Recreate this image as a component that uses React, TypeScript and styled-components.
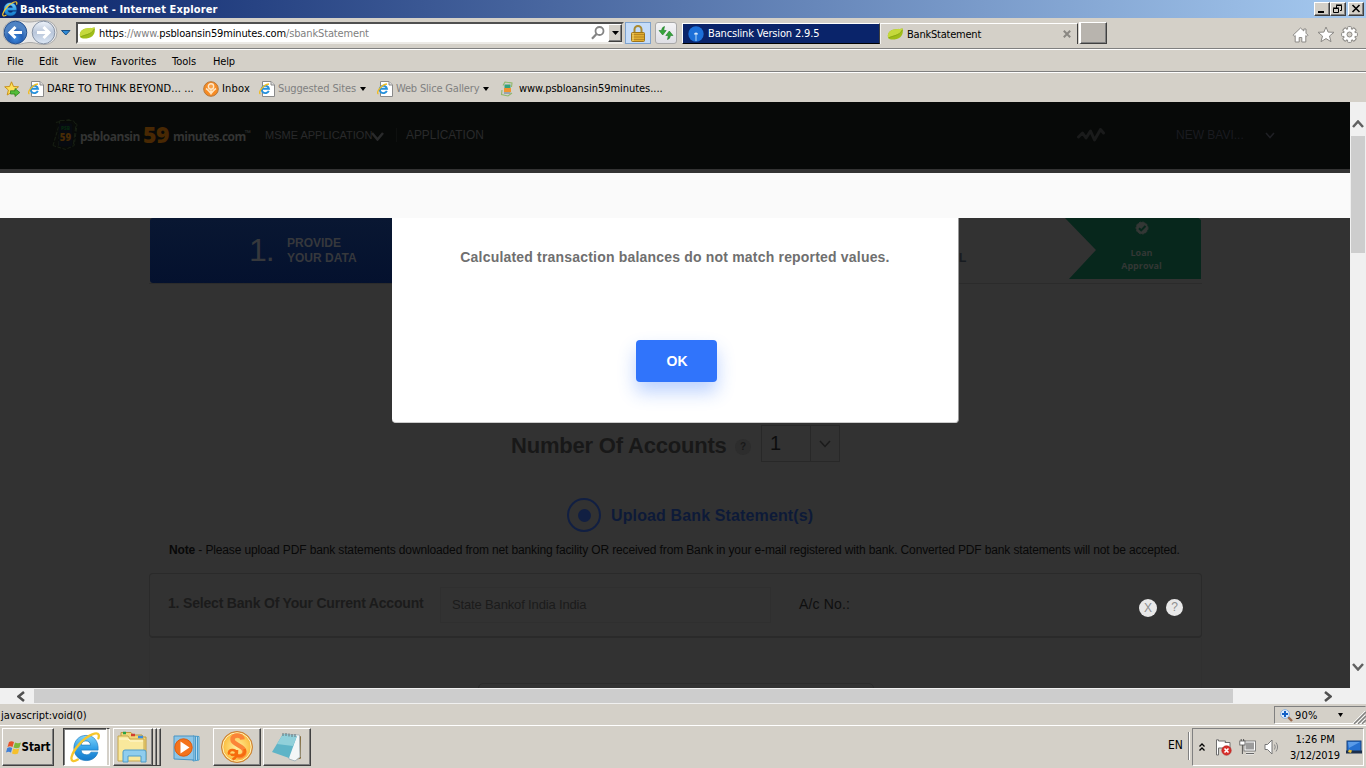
import React from "react";
import styled, { createGlobalStyle, css } from "styled-components";

const Global = createGlobalStyle`
  * { box-sizing: border-box; }
  html, body { margin: 0; padding: 0; overflow: hidden; }
  body { background: #d4d0c8; }
  svg { display: block; flex: none; }
`;

const uiFont = `"DejaVu Sans Condensed", Tahoma, "DejaVu Sans", sans-serif`;
const pageFont = `"Liberation Sans", Arial, sans-serif`;

const Screen = styled.div`
  width: 1366px;
  height: 768px;
  display: flex;
  flex-direction: column;
  background: #d4d0c8;
  font-family: ${uiFont};
  font-stretch: condensed;
  font-size: 11px;
  color: #000;
  overflow: hidden;
`;

const Label = styled.span<{ $w?: number; $ls?: number; $color?: string; $ml?: number }>`
  display: block;
  flex: none;
  white-space: nowrap;
  width: ${(p) => (p.$w ? `${p.$w}px` : "auto")};
  letter-spacing: ${(p) => p.$ls ?? 0}px;
  color: ${(p) => p.$color ?? "inherit"};
  margin-left: ${(p) => p.$ml ?? 0}px;
`;

const Dark = styled.span`
  color: #000;
`;

const Icon = styled.div<{ $ml?: number; $mt?: number }>`
  flex: none;
  margin-left: ${(p) => p.$ml ?? 0}px;
  margin-top: ${(p) => p.$mt ?? 0}px;
`;

const raised = css`
  border: 1px solid;
  border-color: #fff #404040 #404040 #fff;
  box-shadow: inset -1px -1px 0 #808080;
`;

/* ---------- window chrome ---------- */

const TitleBar = styled.header`
  height: 18px;
  flex: none;
  display: flex;
  align-items: center;
  padding: 0 2px;
  color: #fff;
  font-weight: bold;
  background: linear-gradient(90deg, #0a246a, #a6caf0);
`;

const WindowButtons = styled.div`
  margin-left: auto;
  display: flex;
`;

const WindowButton = styled.div<{ $gap?: number }>`
  ${raised}
  width: 16px;
  height: 14px;
  margin-left: ${(p) => p.$gap ?? 0}px;
  background: #d4d0c8;
`;

const NavBar = styled.div`
  height: 31px;
  flex: none;
  display: flex;
  align-items: flex-start;
  padding: 4px 0 0 3px;
  border-bottom: 1px solid #808080;
`;

const AddressBar = styled.div`
  width: 548px;
  height: 22px;
  margin-left: 5px;
  display: flex;
  align-items: center;
  padding-left: 1px;
  background: #fff;
  border: 2px solid;
  border-color: #505050 #d4d0c8 #eceae6 #505050;
`;

const DropButton = styled.div`
  ${raised}
  width: 16px;
  height: 18px;
  margin-left: 3px;
  padding: 6px 0 0 3px;
  background: #d4d0c8;
`;

const ToolButton = styled.div<{ $active?: boolean }>`
  width: ${(p) => (p.$active ? 26 : 22)}px;
  height: 22px;
  margin-left: ${(p) => (p.$active ? 1 : 4)}px;
  display: flex;
  justify-content: center;
  align-items: center;
  border: 1px solid ${(p) => (p.$active ? "#7da2ce" : "#a9a9a9")};
  border-radius: ${(p) => (p.$active ? 0 : 3)}px;
  background: ${(p) => (p.$active ? "#c5dcf9" : "linear-gradient(#f4f4f6, #dedee4)")};
`;

const Tab = styled.div<{ $dark?: boolean }>`
  width: 198px;
  height: 21px;
  margin-top: 1px;
  display: flex;
  align-items: center;
  border: solid;
  border-width: 1px 1px ${(p) => (p.$dark ? "1px" : "0")} 1px;
  border-color: ${(p) => (p.$dark ? "#fff #404040 #000 #fff" : "#fff #404040 #000 #f4f3f0")};
  color: ${(p) => (p.$dark ? "#fff" : "#000")};
  background: ${(p) => (p.$dark ? "#0a246a" : "#d4d0c8")};
`;

const NewTab = styled.div`
  ${raised}
  width: 28px;
  height: 22px;
  margin-left: 1px;
  background: #b8b4ae;
  border-left-width: 2px;
`;

const MenuBar = styled.nav`
  height: 23px;
  flex: none;
  display: flex;
  align-items: center;
  padding: 1px 0 0 7px;
  border-top: 1px solid #fff;
  border-bottom: 1px solid #808080;
`;

const FavoritesBar = styled.div`
  height: 30px;
  flex: none;
  display: flex;
  align-items: center;
  padding: 2px 0 0 4px;
  border-top: 1px solid #fff;
`;

/* ---------- viewport ---------- */

const Viewport = styled.main`
  height: 586px;
  flex: none;
  display: flex;
`;

const Page = styled.div`
  position: relative;
  width: 1350px;
  display: flex;
  flex-direction: column;
  background: #323232;
  font-family: ${pageFont};
  font-stretch: normal;
  overflow: hidden;
`;

const SiteHeader = styled.div`
  height: 67px;
  flex: none;
  display: flex;
  align-items: center;
  padding: 0 0 2px 52px;
  background: #070908;
  color: #292a2b;
`;

const Brand = styled.div`
  display: flex;
  align-items: center;
  margin: 4px 0 0 1px;
  width: 186px;
  color: #333433;
  font-family: "Open Sans", sans-serif;
  font-weight: 700;
  font-size: 12px;
`;

const BrandNumber = styled.span`
  width: 30px;
  flex: none;
  padding-left: 3px;
  margin-top: -6px;
  font-size: 23px;
  font-weight: 800;
  line-height: 24px;
  letter-spacing: -0.5px;
  color: #482803;
`;

const Tm = styled.span`
  font-size: 8px;
  line-height: 8px;
  margin: -8px 0 0 -1px;
`;

const NavText = styled.span<{ $w: number; $size: number; $color?: string }>`
  display: block;
  flex: none;
  white-space: nowrap;
  width: ${(p) => p.$w}px;
  font-size: ${(p) => p.$size}px;
  color: ${(p) => p.$color ?? "inherit"};
`;

const Separator = styled.i`
  width: 1px;
  height: 14px;
  margin: 0 9px 0 12px;
  background: #0e100f;
`;

const LightBand = styled.div`
  height: 49px;
  flex: none;
  border-top: 4px solid #333;
  background: #fafafa;
`;

const Body = styled.div`
  width: 1053px;
  margin-left: 149px;
  display: flex;
  flex-direction: column;
  align-items: stretch;
`;

const Stepper = styled.div`
  height: 66px;
  display: flex;
  align-items: flex-start;
  justify-content: space-between;
  border-bottom: 1px solid #2b2b2b;
  padding: 0 0 0 1px;
`;

const ActiveStep = styled.div`
  width: 260px;
  height: 65px;
  display: flex;
  padding: 15px 0 0 99px;
  border-radius: 3px;
  color: #36383c;
  background: linear-gradient(#091732, #04112e);
`;

const StepNumber = styled.span`
  width: 38px;
  font-size: 32px;
  line-height: 34px;
  letter-spacing: -1px;
`;

const StepTitle = styled.span`
  padding-top: 3px;
  font-weight: bold;
  font-size: 12px;
  line-height: 15px;
`;

const StepEnd = styled.div`
  display: flex;
`;

const HiddenStep = styled.span`
  padding-top: 33px;
  width: 106px;
  font-size: 12px;
  font-weight: bold;
  color: #171b20;
`;

const ApprovalStep = styled.div`
  width: 136px;
  height: 61px;
  padding: 3px 0 0 17px;
  display: flex;
  flex-direction: column;
  align-items: center;
  margin-right: 1px;
  background: #07271c;
  clip-path: polygon(0 0, 98% 0, 100% 2px, 100% 100%, 4px 100%, 31px 32px);
  color: #333735;
  font: bold 9px/13px "Open Sans", sans-serif;
  text-align: center;
`;

const ApprovalText = styled.span`
  padding-top: 11px;
`;

const AccountsRow = styled.div`
  height: 37px;
  margin-top: 141px;
  padding-left: 362px;
  display: flex;
  align-items: center;
  color: #181818;
`;

const Heading = styled.h2`
  margin: 4px 0 0;
  width: 224px;
  white-space: nowrap;
  font-size: 22px;
  letter-spacing: -0.2px;
  line-height: 26px;
  font-weight: bold;
`;

const Badge = styled.i<{ $size: number; $bg: string; $color: string; $ml?: number; $mt?: number; $bold?: boolean }>`
  width: ${(p) => p.$size}px;
  height: ${(p) => p.$size}px;
  margin-left: ${(p) => p.$ml ?? 0}px;
  margin-top: ${(p) => p.$mt ?? 0}px;
  flex: none;
  border-radius: 50%;
  background: ${(p) => p.$bg};
  color: ${(p) => p.$color};
  font: ${(p) => (p.$bold ? "bold 10px" : "12px")} / ${(p) => p.$size}px ${pageFont};
  text-align: center;
`;

const Select = styled.div`
  width: 79px;
  height: 37px;
  margin-left: 10px;
  display: flex;
  border: 1px solid #282828;
`;

const SelectValue = styled.span`
  width: 49px;
  padding-left: 8px;
  font-size: 20px;
  line-height: 34px;
  color: #0d0d0d;
  border-right: 1px solid #282828;
`;

const UploadRow = styled.div`
  height: 34px;
  margin-top: 36px;
  padding-left: 418px;
  display: flex;
  align-items: center;
`;

const Radio = styled.i`
  width: 34px;
  height: 34px;
  display: grid;
  place-items: center;
  border: 2px solid #111f42;
  border-radius: 50%;
  &::after {
    content: "";
    width: 13px;
    height: 13px;
    border-radius: 50%;
    background: #111f42;
  }
`;

const UploadTitle = styled.span`
  margin: 1px 0 0 10px;
  font-size: 16px;
  letter-spacing: 0.13px;
  font-weight: bold;
  color: #0d1a38;
`;

const Note = styled.p`
  margin: 10px 0 0;
  height: 31px;
  padding-left: 20px;
  white-space: nowrap;
  font-size: 12px;
  letter-spacing: -0.137px;
  line-height: 16px;
  color: #080808;
`;

const AccountCard = styled.div`
  height: 65px;
  display: flex;
  align-items: center;
  padding-left: 17px;
  border: 1px solid #2a2a2a;
  border-bottom-width: 2px;
  border-radius: 4px;
`;

const CardTitle = styled.span`
  width: 273px;
  flex: none;
  padding-left: 1px;
  margin-top: -4px;
  white-space: nowrap;
  font-size: 14px;
  letter-spacing: -0.19px;
  font-weight: bold;
  color: #1b1b1b;
`;

const Field = styled.span`
  width: 331px;
  flex: none;
  height: 36px;
  margin-top: -1px;
  padding-left: 11px;
  font-size: 13px;
  letter-spacing: -0.15px;
  line-height: 34px;
  color: #1b1b1b;
  border: 1px solid #2f2f2f;
`;

const AccountNo = styled.span`
  width: 368px;
  flex: none;
  margin-top: -2px;
  padding-left: 28px;
  font-size: 14px;
  letter-spacing: 0.15px;
  color: #0f0f0f;
`;

const CardBody = styled.div`
  height: 60px;
  padding: 45px 0 0 328px;
  border: 1px solid #303030;
  border-top: 0;
`;

const InnerField = styled.div`
  width: 396px;
  height: 20px;
  border: 1px solid #2b2b2b;
  border-radius: 5px;
`;

const Dialog = styled.section`
  position: absolute;
  left: 392px;
  top: 116px;
  width: 567px;
  height: 205px;
  display: flex;
  flex-direction: column;
  align-items: center;
  padding: 30px 0 0 0;
  background: #fff;
  border-radius: 0 0 4px 4px;
  border-bottom: 1px solid #ccc;
  border-right: 1px solid #999;
`;

const DialogText = styled.p`
  margin: 0;
  height: 92px;
  font-size: 14px;
  letter-spacing: 0.19px;
  line-height: 18px;
  font-weight: bold;
  color: #6f6f6f;
`;

const OkButton = styled.button`
  width: 81px;
  height: 42px;
  margin-left: 3px;
  flex: none;
  padding: 0 0 0 1px;
  border: 0;
  border-radius: 4px;
  background: #3074fb;
  color: #fff;
  font: bold 14px ${pageFont};
  box-shadow: 0 10px 18px rgba(48, 116, 251, 0.32);
`;

const VScroll = styled.div`
  width: 16px;
  display: flex;
  flex-direction: column;
  align-items: center;
  background: #f0f0f0;
`;

const VThumb = styled.div`
  width: 14px;
  height: 117px;
  margin: 8px 0 410px;
  background: #cdcdcd;
`;

const HScroll = styled.div`
  height: 16px;
  flex: none;
  display: flex;
  align-items: center;
  padding-left: 17px;
  background: #f0f0f0;
`;

const HThumb = styled.div`
  width: 1199px;
  height: 14px;
  margin: 0 91px 0 9px;
  background: #cdcdcd;
`;

const StatusBar = styled.div`
  height: 21px;
  flex: none;
  display: flex;
  align-items: center;
  padding: 1px 0 0 1px;
`;

const ZoomBox = styled.div`
  width: 92px;
  height: 18px;
  margin-left: auto;
  padding-left: 5px;
  display: flex;
  align-items: center;
  border: 1px solid;
  border-color: #808080 #d4d0c8 #fff #808080;
`;

/* ---------- task bar ---------- */

const TaskBar = styled.footer`
  height: 43px;
  flex: none;
  display: flex;
  align-items: flex-start;
  padding: 2px 0 0 2px;
  border-top: 1px solid #fff;
`;

const TaskButton = styled.div<{ $w: number; $ml?: number }>`
  ${raised}
  width: ${(p) => p.$w}px;
  height: 38px;
  margin-left: ${(p) => p.$ml ?? 2}px;
  flex: none;
  display: flex;
  align-items: center;
  justify-content: center;
  font-size: 11.500px;
  font-weight: bold;
`;

const PressedButton = styled.div`
  width: 44px;
  height: 38px;
  margin-left: 9px;
  flex: none;
  display: grid;
  place-items: center;
  background: #fff;
  border: 1px solid;
  border-color: #404040 #fff #fff #404040;
  box-shadow: inset 1px 1px 0 #808080;
`;

const StackEdge = styled.i<{ $light?: boolean }>`
  width: ${(p) => (p.$light ? 3 : 4)}px;
  height: 38px;
  flex: none;
  border-right: 1px solid ${(p) => (p.$light ? "#fff" : "#404040")};
  border-top: 1px solid ${(p) => (p.$light ? "#404040" : "#fff")};
  border-bottom: 1px solid ${(p) => (p.$light ? "#fff" : "#404040")};
  box-shadow: ${(p) => (p.$light ? "none" : "inset -1px 0 0 #808080")};
`;

const Language = styled.div`
  margin-left: auto;
  width: 24px;
  height: 28px;
  margin-top: 4px;
  line-height: 26px;
  padding-left: 3px;
  font-size: 12px;
  border-right: 1px solid #808080;
  box-shadow: 1px 0 0 #fff;
  white-space: nowrap;
`;

const Tray = styled.div`
  width: 172px;
  height: 38px;
  margin: 0 2px 0 3px;
  flex: none;
  display: flex;
  align-items: center;
  padding-left: 6px;
  border: 1px solid;
  border-color: #808080 #fff #fff #808080;
`;

const Clock = styled.div`
  width: 60px;
  margin: 1px 0 0 6px;
  text-align: center;
  line-height: 16px;
  letter-spacing: -0.1px;
  white-space: nowrap;
`;

/* ---------- icons ---------- */

const IELogo = ({ size = 16 }: { size?: number }) => (
  <svg width={size} height={size} viewBox="0 0 32 32">
    <defs>
      <linearGradient id="ieBlue" x2="0" y2="1">
        <stop offset="0" stopColor="#7ed3fa" />
        <stop offset=".55" stopColor="#2c9ce6" />
        <stop offset="1" stopColor="#1779c9" />
      </linearGradient>
    </defs>
    <path
      fill="url(#ieBlue)"
      stroke="#1c78bd"
      strokeWidth=".7"
      fillRule="evenodd"
      d="M16.500 3.500C9 3.500 4 9.500 4 16.500S9 29.500 16.600 29.500c6.200 0 10.800-3.500 12.100-8.700h-7c-.9 1.700-2.500 2.700-4.800 2.700-3.300 0-5.300-1.800-5.400-4.800H29C29.600 9.500 24.800 3.500 16.500 3.500zm-5 10c.4-2.700 2.200-4.300 4.900-4.300s4.600 1.600 4.800 4.300z"
    />
    <path
      fill="none"
      stroke="#f6c62c"
      strokeWidth="2.400"
      strokeLinecap="round"
      d="M8 28.500c-4 2.500-7.500 2-6.300-3C3.500 18 14 6 23 2.500c5-2 8-1 6.300 4"
    />
  </svg>
);

const IEPage = () => (
  <svg width="16" height="16" viewBox="0 0 16 16">
    <path d="M3.500.5h8.500l3.500 3.500v11.500h-12z" fill="#fff" stroke="#8a8a8a" />
    <path d="M12 .5V4h3.500" fill="#ddd" stroke="#8a8a8a" />
    <path d="M9.800 9.800A3.700 3.700 0 1 1 10 7.800H3.400" fill="none" stroke="#2691dc" strokeWidth="1.900" />
    <path d="M1.500 12.500C-1.500 13 3 4 10 3" fill="none" stroke="#f1bc22" strokeWidth="1.300" />
  </svg>
);

const Leaf = () => (
  <svg width="17" height="14" viewBox="0 0 17 14">
    <path d="M1 10.500C0 5 4.500 2.200 9 2.200c3 0 5-.2 6.500-.9C17 7 14 12 7.500 12.500 4.500 12.700 2 12.500 1 10.500z" fill="#9fbd18" />
    <path d="M1 10.500C0 5 4.500 2.200 9 2.200c3 0 5-.2 6.500-.9C14.500 8.500 7 8 1 10.500z" fill="#c5d93c" />
    <path d="M1.500 11C6 8.500 12 9 15.300 3" fill="none" stroke="#84a313" strokeWidth=".8" />
  </svg>
);

const DownTriangle = ({ w = 7, color = "#000" }: { w?: number; color?: string }) => (
  <svg width={w} height="4" viewBox="0 0 7 4" preserveAspectRatio="none">
    <path d="M0 0h7L3.500 4z" fill={color} />
  </svg>
);

const NavButtons = () => (
  <svg width="68" height="26" viewBox="0 0 68 26">
    <defs>
      <radialGradient id="backFill" cy=".75">
        <stop offset="0" stopColor="#3f8ce0" />
        <stop offset=".6" stopColor="#2560b4" />
        <stop offset="1" stopColor="#4f83c4" />
      </radialGradient>
      <linearGradient id="fwdFill" x2="0" y2="1">
        <stop offset="0" stopColor="#eef3fa" />
        <stop offset=".5" stopColor="#b9c6da" />
        <stop offset="1" stopColor="#dce7f5" />
      </linearGradient>
    </defs>
    <path d="M12 .5C20 .5 20 2 26 2S34 .5 42 .5a12 12 0 0 1 0 24c-8 0-9-2-15-2s-7 2-15 2a12 12 0 0 1 0-24z" fill="#e8e8e8" stroke="#aaa" />
    <circle cx="12.500" cy="12.500" r="11.300" fill="url(#backFill)" stroke="#25508e" />
    <path d="M19 12.500H8M12.500 7L7 12.500l5.500 5.500" fill="none" stroke="#fff" strokeWidth="3" />
    <circle cx="40.500" cy="12.500" r="11.300" fill="url(#fwdFill)" stroke="#8793a5" />
    <path d="M34 12.500h11M40.500 7l5.500 5.500-5.500 5.500" fill="none" stroke="#fff" strokeWidth="3" />
    <path d="M58.500 10.500h8.500l-4.200 4.500z" fill="#2e8ad6" stroke="#174e85" />
  </svg>
);

const SearchIcon = () => (
  <svg width="14" height="14" viewBox="0 0 14 14" fill="none" stroke="#848484">
    <circle cx="8.500" cy="5" r="4" strokeWidth="1.800" />
    <path d="M5.500 8L1 12.800" strokeWidth="2.200" />
  </svg>
);

const LockIcon = () => (
  <svg width="14" height="17" viewBox="0 0 14 17">
    <path d="M3.500 8V4.500a3.500 3.500 0 0 1 7 0V8" fill="none" stroke="#a88932" strokeWidth="2" />
    <rect x=".5" y="7.500" width="13" height="9" rx="1" fill="#e0ad2f" stroke="#9d741b" />
    <path d="M1 9.500h12M1 12h12M1 14.500h12" stroke="#b88722" />
    <path d="M2 8v8" stroke="#f7db78" />
  </svg>
);

const RefreshIcon = () => (
  <svg width="16" height="14" viewBox="0 0 16 14">
    <path d="M6.500.5Q4 1 3.500 4.500H1L4.700 9l3.500-4.500H5.800Q6 2.500 6.500.5z" fill="#35a53a" stroke="#207a28" strokeWidth=".6" />
    <path d="M9.500 13.500Q12 13 12.500 9.500H15L11.300 5 7.800 9.500h2.400q-.2 2-.7 4z" fill="#35a53a" stroke="#207a28" strokeWidth=".6" />
  </svg>
);

const InfoGlobe = () => (
  <svg width="16" height="16" viewBox="0 0 16 16">
    <circle cx="8" cy="8" r="7.700" fill="#1c70d8" />
    <path d="M8 15V8" stroke="#8fc0f2" strokeWidth="1.300" />
    <path d="M6 8.500a2 2 0 0 1 4 0z" fill="#d8e9fb" />
  </svg>
);

const HomeIcon = () => (
  <svg width="17" height="16" viewBox="0 0 17 16">
    <path d="M8.500 1L1 8.200l1.200 1.200 1-.9V15h4v-4.500h2.600V15h4V8.500l1 .9L16 8.200l-2-2V2h-2.200v2z" fill="#fff" stroke="#8b8985" />
  </svg>
);

const StarIcon = () => (
  <svg width="18" height="17" viewBox="0 0 18 17">
    <path d="M9 1l2.100 5.100 5.900.2-4.500 3.700 1.500 5.700L9 12.600l-5 3.100L5.500 10 1 6.300l5.900-.2z" fill="#fff" stroke="#8b8985" />
  </svg>
);

const gearTeeth = [0, 45, 90, 135, 180, 225, 270, 315];

const GearIcon = () => (
  <svg width="17" height="17" viewBox="0 0 17 17">
    {gearTeeth.map((a) => (
      <rect key={a} x="6.600" y=".6" width="3.800" height="4" rx=".8" fill="#fff" stroke="#8b8985" transform={`rotate(${a} 8.500 8.500)`} />
    ))}
    <circle cx="8.500" cy="8.500" r="5.500" fill="#fff" />
    <circle cx="8.500" cy="8.500" r="2.500" fill="#d4d0c8" stroke="#8b8985" />
  </svg>
);

const AddFavorite = () => (
  <svg width="17" height="16" viewBox="0 0 17 16">
    <path d="M7.500.8l2 4.700 5 .3-3.900 3.300 1.300 5-4.400-2.700L3.200 14l1.200-5L.7 5.800l4.900-.3z" fill="#fde05a" stroke="#c9921c" />
    <path d="M6.500 9.800h4.500V7.500l4.800 4-4.800 4v-2.500H6.500z" fill="#53bd3a" stroke="#2e8523" strokeWidth=".8" />
  </svg>
);

const InboxIcon = () => (
  <svg width="16" height="16" viewBox="0 0 16 16">
    <circle cx="8" cy="8" r="7.300" fill="#f68b24" stroke="#b7783a" />
    <circle cx="8" cy="5.500" r="2.700" fill="#f9a24a" stroke="#ffe8c9" strokeWidth="1.400" />
    <path d="M3 7.500q2 1 5 5 3-4 5-5M8 8v5.500" fill="none" stroke="#ffe3bd" strokeWidth="1.500" />
  </svg>
);

const NotesIcon = () => (
  <svg width="14" height="16" viewBox="0 0 14 16">
    <path d="M3 4.500L5 1l7 1-.5 4M2 9l-.5 4.500L8 15l4-3" fill="none" stroke="#90b96c" strokeWidth="1.100" />
    <rect x="4.500" y="3.500" width="6" height="3.500" fill="#35a37c" />
    <rect x="4" y="7" width="7" height="4" fill="#f0942f" />
    <path d="M4 12h6.500" stroke="#8597a5" strokeWidth="1.500" />
  </svg>
);

const BrandMark = () => (
  <svg width="26" height="33" viewBox="0 0 27 33">
    <g fill="#080a08" stroke="#182014">
      <path d="M1 28L7 8M4 4l14-3 8 5-3 22-9 4-13-4" strokeDasharray="4 1.500" />
      <path d="M8 2h14l3 4-3 22H7z" strokeDasharray="5 2" />
    </g>
    <rect x="7" y="5" width="14" height="24" rx="1.500" fill="#070a10" />
    <text x="14" y="12" textAnchor="middle" fontFamily="Open Sans" fontWeight="800" fontSize="5" fill="#06280f">PSB</text>
    <text x="14" y="23" textAnchor="middle" fontFamily="Open Sans" fontWeight="800" fontSize="10" fill="#482b05">59</text>
  </svg>
);

const Chevron = ({ w, h, sw, color, dir = "down" }: { w: number; h: number; sw: number; color: string; dir?: string }) => {
  const paths: Record<string, string> = {
    down: `M1 1L${w / 2} ${h - 1.500}L${w - 1} 1`,
    up: `M1 ${h - 1}L${w / 2} 1.500L${w - 1} ${h - 1}`,
    left: `M${w - 1} 1L1.500 ${h / 2}L${w - 1} ${h - 1}`,
    right: `M1 1L${w - 1.500} ${h / 2}L1 ${h - 1}`,
  };
  return (
    <svg width={w} height={h} fill="none" stroke={color} strokeWidth={sw}>
      <path d={paths[dir]} />
    </svg>
  );
};

const WaveIcon = () => (
  <svg width="28" height="14" viewBox="0 0 28 14" fill="none" stroke="#1a1b1b" strokeWidth="3">
    <path d="M1.500 9l4-4 3.500 5 4.500-7L17.500 12 23.500 1.500l3 3.500" strokeLinejoin="round" strokeLinecap="round" />
  </svg>
);

const CheckBadge = () => (
  <svg width="14" height="14" viewBox="0 0 14 14">
    <circle cx="7" cy="7" r="6" fill="#333735" stroke="#333735" strokeDasharray="2 1.500" />
    <path d="M4 7.200l2.200 2.200L10.500 5" fill="none" stroke="#07271c" strokeWidth="2" />
  </svg>
);

const ZoomIcon = () => (
  <svg width="13" height="13" viewBox="0 0 13 13">
    <path d="M8 8l4 4" stroke="#9a684a" strokeWidth="2.400" />
    <circle cx="5" cy="5" r="4.400" fill="#dcecfc" stroke="#8eb1dc" />
    <path d="M5 2v6M2 5h6" stroke="#1260c6" strokeWidth="2" />
  </svg>
);

const Grip = () => (
  <svg width="13" height="13" viewBox="0 0 13 13" strokeWidth="1.400">
    <path d="M1 13L13 1M5 13l8-8M9 13l4-4" stroke="#808080" />
    <path d="M0 12L12 0M4 12l8-8M8 12l4-4" stroke="#fff" strokeWidth=".8" />
  </svg>
);

const WindowsFlag = () => (
  <svg width="16" height="15" viewBox="0 0 16 15">
    <path d="M3 2q2.500-1.500 5 0L6.500 7q-2.500-1.500-5 0z" fill="#e6532a" />
    <path d="M9 2.500q3 1.500 6 0L13.500 7.500q-3 1.500-6 0z" fill="#7fb83a" />
    <path d="M1.200 8q2.500-1.500 5 0L5 12.500q-2.500-1.500-5 0z" fill="#3f7fd6" />
    <path d="M7.200 8.500q3 1.500 6 0L12 13.500q-3 1.500-6 0z" fill="#f6c02c" />
  </svg>
);

const FolderIcon = () => (
  <svg width="34" height="32" viewBox="0 0 34 32">
    <path d="M5 4V1.500h10L17 4h9l1 2h3v23H6z" fill="#f0d679" stroke="#bd9a3f" />
    <path d="M2 5h10l2 3h14v22H2z" fill="#f9e89c" stroke="#c7a64c" />
    <path d="M7 2h3" stroke="#28a344" strokeWidth="2.500" />
    <path d="M15 4h4" stroke="#d33d2e" strokeWidth="2.500" />
    <path d="M22 6h5" stroke="#3a8de0" strokeWidth="2.500" />
    <path d="M3 8h9l2 2h13" stroke="#fff8d2" fill="none" />
    <path d="M7 31V21q0-2 2-2h19q2 0 2 2v10h-5v-6H12v6z" fill="#8fcdee" stroke="#4e9cc9" />
  </svg>
);

const MediaIcon = () => (
  <svg width="30" height="28" viewBox="0 0 30 28">
    <path d="M20 2l6 .5V26l-6 1z" fill="#b8def2" stroke="#4a9bc9" />
    <path d="M22.500 2v24M24.500 2v24" stroke="#4a9bc9" />
    <path d="M1 2h20v24L1 25z" fill="#8cc5e6" stroke="#4a94c3" />
    <circle cx="10.500" cy="13.500" r="8.700" fill="#f4731c" stroke="#dd5a0c" />
    <path d="M7.500 7.500l9 6-9 6z" fill="#fff" />
  </svg>
);

const SIcon = () => (
  <svg width="34" height="34" viewBox="0 0 34 34">
    <defs>
      <radialGradient id="gold">
        <stop offset="0" stopColor="#fff0a0" />
        <stop offset=".8" stopColor="#fcc44b" />
        <stop offset="1" stopColor="#f3a832" />
      </radialGradient>
    </defs>
    <circle cx="17" cy="17" r="15.500" fill="url(#gold)" stroke="#c8813c" />
    <circle cx="17" cy="17" r="14.200" fill="none" stroke="#fff1bd" />
    <path d="M22.500 9.500C22 4 12.500 4 12.500 9.500c0 5.500 12 6 12 12 0 4-4 6-7.500 4.500" fill="none" stroke="#fb8538" strokeWidth="4.500" />
    <path d="M24.500 19c1.500 5-3 8-7 6.500M9.500 24.500C6.500 19 17 18.500 16 23c-.6 2.600-4 2.500-5 .8M17 20c0 5-.5 8-4.500 9.500" fill="none" stroke="#f66c0d" strokeWidth="2.600" />
  </svg>
);

const NotepadIcon = () => (
  <svg width="32" height="30" viewBox="0 0 32 30">
    <path d="M27 3l3 1.500v22l-4 1z" fill="#856c3b" />
    <path d="M13 2l15.500 1 .5 22-5 4-6-2z" fill="#f3f6f7" stroke="#a9b6bb" />
    <path d="M12 2l14 2-8 22L1 20z" fill="#5fb4c7" />
    <path d="M12 2l14 2-4 10L6 12z" fill="#91d0da" />
    <path d="M12 1v3M15 1v3M18 1.500v3M21 2v3M24 2v3" stroke="#65747a" />
  </svg>
);

const FlagIcon = () => (
  <svg width="17" height="17" viewBox="0 0 17 17">
    <path d="M1.500 16V.8h2V2h7l-.5 1.500h5V10h-7L8.500 9h-5v7z" fill="#fff" stroke="#6e6e6e" />
    <circle cx="11.500" cy="11.500" r="4.700" fill="#d9302c" stroke="#a91a17" strokeWidth=".6" />
    <path d="M9.500 9.500l4 4M13.500 9.500l-4 4" stroke="#fff" strokeWidth="1.600" />
  </svg>
);

const NetworkIcon = () => (
  <svg width="17" height="16" viewBox="0 0 17 16">
    <rect x="5" y="2" width="11.500" height="10" fill="#fff" stroke="#666" strokeWidth=".8" />
    <rect x="6.500" y="3.500" width="8.500" height="7" fill="#9c9c9c" />
    <path d="M7 14.500h8" stroke="#fff" strokeWidth="2.400" />
    <path d="M7 14.500h8" stroke="#666" strokeWidth="1.200" />
    <rect x=".8" y="2" width="5.200" height="4" fill="#fff" stroke="#555" strokeWidth=".8" />
    <path d="M2.200 0v2M4.600 0v2M3.400 6v9" stroke="#555" />
  </svg>
);

const SpeakerIcon = () => (
  <svg width="15" height="16" viewBox="0 0 15 16" fill="none" stroke="#777">
    <path d="M1 5.500h2.500L8 1v14l-4.500-4.500H1z" fill="#fff" />
    <path d="M10.500 5.500q1.500 2.500 0 5M12 3.500q3.200 4.500 0 9" stroke="#888" />
  </svg>
);

const DesktopIcon = () => (
  <svg width="16" height="14" viewBox="0 0 16 14">
    <rect x="1" y="1" width="14" height="11" fill="#2670d0" stroke="#16407b" />
    <path d="M2 2h12L3 8z" fill="#5a9be8" />
    <path d="M0 12h16" stroke="#1a2e4c" strokeWidth="3" />
    <path d="M3 9.500l3 1-1 2.500-3-1z" fill="#e8bf34" />
  </svg>
);

/* ---------- sections ---------- */

const Chrome = () => (
  <>
    <TitleBar>
      <IELogo />
      <Label $ml={2} $ls={0.12}>BankStatement - Internet Explorer</Label>
      <WindowButtons>
        <WindowButton>
          <svg width="14" height="12"><path d="M3 9h6" stroke="#000" strokeWidth="2" /></svg>
        </WindowButton>
        <WindowButton>
          <svg width="14" height="12" fill="none" stroke="#000">
            <path d="M5.500 5V2.500h5v5H9M5 2h6M2.500 5.500h5v4h-5zM2 5h6" />
          </svg>
        </WindowButton>
        <WindowButton $gap={2}>
          <svg width="14" height="12"><path d="M3.500 2l7 7M10.500 2l-7 7" stroke="#000" strokeWidth="1.600" /></svg>
        </WindowButton>
      </WindowButtons>
    </TitleBar>
    <NavBar>
      <Icon $mt={-2}><NavButtons /></Icon>
      <AddressBar>
        <Leaf />
        <Label $ml={3} $w={488} $ls={-0.14} $color="#808080">
          <Dark>https</Dark>://www.<Dark>psbloansin59minutes.com</Dark>/sbankStatement
        </Label>
        <Icon $ml={4}><SearchIcon /></Icon>
        <DropButton><DownTriangle /></DropButton>
      </AddressBar>
      <ToolButton $active><LockIcon /></ToolButton>
      <ToolButton><RefreshIcon /></ToolButton>
      <Icon $ml={5} />
      <Tab $dark>
        <Icon $ml={5}><InfoGlobe /></Icon>
        <Label $ml={4} $ls={-0.16}>Bancslink Version 2.9.5</Label>
      </Tab>
      <Tab>
        <Icon $ml={6}><Leaf /></Icon>
        <Label $ml={3} $w={156} $ls={-0.22}>BankStatement</Label>
        <svg width="8" height="8"><path d="M.8.8l6.400 6.400M7.200.8L.8 7.200" stroke="#8a8782" strokeWidth="2" /></svg>
      </Tab>
      <NewTab />
      <Icon $ml={185} $mt={5}><HomeIcon /></Icon>
      <Icon $ml={8} $mt={4}><StarIcon /></Icon>
      <Icon $ml={6} $mt={4}><GearIcon /></Icon>
    </NavBar>
    <MenuBar>
      <Label $w={32}>File</Label>
      <Label $w={34}>Edit</Label>
      <Label $w={38}>View</Label>
      <Label $w={61} $ls={0.1}>Favorites</Label>
      <Label $w={41}>Tools</Label>
      <Label $ls={-0.2}>Help</Label>
    </MenuBar>
    <FavoritesBar>
      <AddFavorite />
      <Icon $ml={7}><IEPage /></Icon>
      <Label $ml={3} $w={156} $ls={0.1}>DARE TO THINK BEYOND... ...</Label>
      <InboxIcon />
      <Label $ml={3} $w={37} $ls={0.2}>Inbox</Label>
      <IEPage />
      <Label $ml={3} $w={82} $ls={-0.13} $color="#808080">Suggested Sites</Label>
      <DownTriangle w={6} />
      <Icon $ml={11}><IEPage /></Icon>
      <Label $ml={3} $w={87} $ls={-0.18} $color="#808080">Web Slice Gallery</Label>
      <DownTriangle w={6} />
      <Icon $ml={11}><NotesIcon /></Icon>
      <Label $ml={5} $ls={-0.04}>www.psbloansin59minutes....</Label>
    </FavoritesBar>
  </>
);

const SitePage = () => (
  <Page>
    <SiteHeader>
      <BrandMark />
      <Brand>
        <Label $w={60} $ls={-0.5} $ml={1}>psbloansin</Label>
        <BrandNumber>59</BrandNumber>
        <Label $ml={3} $ls={-0.5}>minutes.com</Label>
        <Tm>™</Tm>
      </Brand>
      <NavText $w={106} $size={11}>MSME APPLICATION</NavText>
      <Icon $mt={3}><Chevron w={13} h={9} sw={2.500} color="#292a2b" /></Icon>
      <Separator />
      <NavText $w={671} $size={11.900}>APPLICATION</NavText>
      <WaveIcon />
      <Icon $ml={71} />
      <NavText $w={89} $size={12} $color="#1a1b20">NEW BAVI...</NavText>
      <Icon $mt={2}><Chevron w={10} h={7} sw={1.500} color="#1f2024" /></Icon>
    </SiteHeader>
    <LightBand />
    <Body>
      <Stepper>
        <ActiveStep>
          <StepNumber>1.</StepNumber>
          <StepTitle>PROVIDE<br />YOUR DATA</StepTitle>
        </ActiveStep>
        <StepEnd>
          <HiddenStep>L</HiddenStep>
          <ApprovalStep>
            <CheckBadge />
            <ApprovalText>Loan<br />Approval</ApprovalText>
          </ApprovalStep>
        </StepEnd>
      </Stepper>
      <AccountsRow>
        <Heading>Number Of Accounts</Heading>
        <Badge $size={16} $mt={7} $bg="#2d2d2d" $color="#191919" $bold>?</Badge>
        <Select>
          <SelectValue>1</SelectValue>
          <Icon $ml={8} $mt={14}><Chevron w={12} h={8} sw={1.500} color="#1b1b1b" /></Icon>
        </Select>
      </AccountsRow>
      <UploadRow>
        <Radio />
        <UploadTitle>Upload Bank Statement(s)</UploadTitle>
      </UploadRow>
      <Note>
        <b>Note</b> - Please upload PDF bank statements downloaded from net banking facility OR received from Bank in your e-mail registered with bank. Converted PDF bank statements will not be accepted.
      </Note>
      <AccountCard>
        <CardTitle>1. Select Bank Of Your Current Account</CardTitle>
        <Field>State Bankof India India</Field>
        <AccountNo>A/c No.:</AccountNo>
        <Badge $size={18} $mt={5} $bg="#e8e8e8" $color="#8f8f8f">X</Badge>
        <Badge $size={17} $mt={5} $ml={9} $bg="#e8e8e8" $color="#8f8f8f">?</Badge>
      </AccountCard>
      <CardBody><InnerField /></CardBody>
    </Body>
    <Dialog>
      <DialogText>Calculated transaction balances do not match reported values.</DialogText>
      <OkButton>OK</OkButton>
    </Dialog>
  </Page>
);

export default function App() {
  return (
    <Screen>
      <Global />
      <Chrome />
      <Viewport>
        <SitePage />
        <VScroll>
          <Icon $mt={18}><Chevron w={12} h={8} sw={2.500} color="#606060" dir="up" /></Icon>
          <VThumb />
          <Chevron w={12} h={8} sw={2.500} color="#606060" />
        </VScroll>
      </Viewport>
      <HScroll>
        <Chevron w={8} h={11} sw={2.500} color="#505050" dir="left" />
        <HThumb />
        <Chevron w={8} h={11} sw={2.500} color="#505050" dir="right" />
      </HScroll>
      <StatusBar>
        <Label $ls={-0.06}>javascript:void(0)</Label>
        <ZoomBox>
          <ZoomIcon />
          <Label $ml={2} $w={43} $ls={0.2}>90%</Label>
          <DownTriangle w={5} />
          <Icon $ml={10} $mt={5}><Grip /></Icon>
        </ZoomBox>
      </StatusBar>
      <TaskBar>
        <TaskButton $w={52} $ml={0}>
          <WindowsFlag />
          <Label $ls={-0.1}>Start</Label>
        </TaskButton>
        <PressedButton><IELogo size={31} /></PressedButton>
        <StackEdge $light />
        <TaskButton $w={40} $ml={3}><FolderIcon /></TaskButton>
        <StackEdge />
        <StackEdge />
        <Icon $ml={12} $mt={6}><MediaIcon /></Icon>
        <TaskButton $w={48} $ml={10}><SIcon /></TaskButton>
        <TaskButton $w={48}><NotepadIcon /></TaskButton>
        <Language>EN</Language>
        <Tray>
          <svg width="6" height="8" fill="none" stroke="#000" strokeWidth="1.300"><path d="M.5 3.500l2.500-2.500 2.500 2.500M.5 7.500L3 5l2.500 2.500" /></svg>
          <Icon $ml={10}><FlagIcon /></Icon>
          <Icon $ml={7}><NetworkIcon /></Icon>
          <Icon $ml={8}><SpeakerIcon /></Icon>
          <Clock>1:26 PM<br />3/12/2019</Clock>
          <Icon $ml={1}><DesktopIcon /></Icon>
        </Tray>
      </TaskBar>
    </Screen>
  );
}
